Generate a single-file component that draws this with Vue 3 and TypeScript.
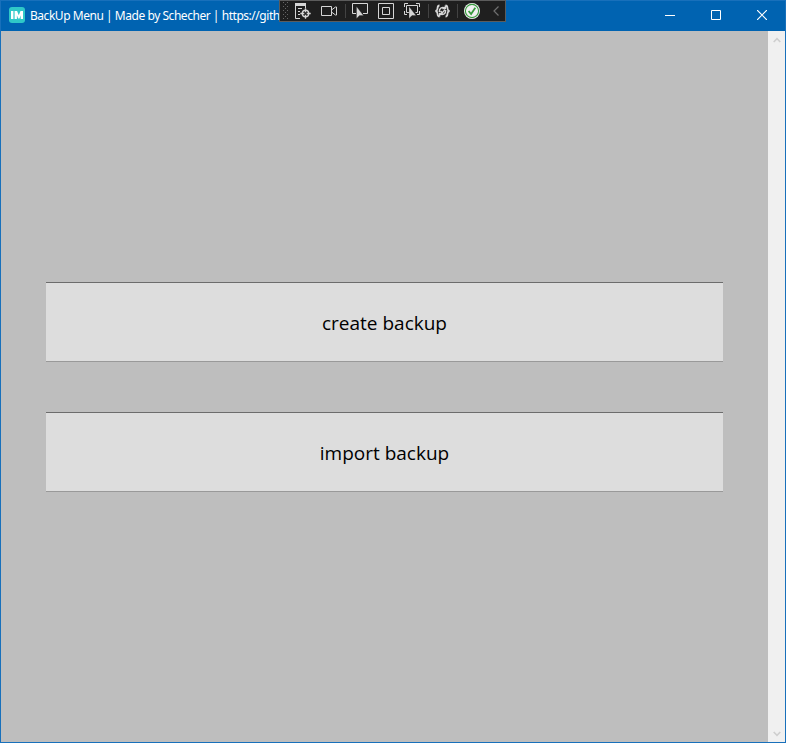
<script setup lang="ts">
import { ref } from 'vue'

interface MenuAction {
  id: string
  label: string
}

const title = ref('BackUp Menu | Made by Schecher | https://gith')
const actions: MenuAction[] = [
  { id: 'create', label: 'create backup' },
  { id: 'import', label: 'import backup' },
]
</script>

<template>
  <div class="window">
    <header class="titlebar">
      <svg class="logo" width="16" height="16" viewBox="0 0 16 16">
        <rect width="16" height="16" rx="3" fill="#2fc8c8" />
        <path d="M2 4h2.4v8H2zM5.6 4h2.5l1.7 4.2L11.5 4H14v8h-2.3V8.2L10.5 11.5H9.1L7.9 8.2V12H5.6z" fill="#fff" />
      </svg>
      <span class="title">{{ title }}</span>
      <div class="controls">
        <button class="control" aria-label="Minimize">
          <svg width="10" height="10" viewBox="0 0 10 10"><path d="M0 5.5h10" /></svg>
        </button>
        <button class="control" aria-label="Maximize">
          <svg width="10" height="10" viewBox="0 0 10 10"><path d="M.5.5h9v9h-9z" /></svg>
        </button>
        <button class="control" aria-label="Close">
          <svg width="10" height="10" viewBox="0 0 10 10"><path d="M0 0l10 10M10 0L0 10" stroke-width="1.2" /></svg>
        </button>
      </div>
    </header>

    <div class="debugbar">
      <svg class="grip" width="6" height="18" viewBox="0 0 6 18">
        <g fill="#666">
          <template v-for="n in 5" :key="n">
            <rect x="0" :y="(n - 1) * 4" width="1" height="1" />
            <rect x="4" :y="(n - 1) * 4" width="1" height="1" />
            <rect v-if="n < 5" x="2" :y="(n - 1) * 4 + 2" width="1" height="1" />
          </template>
        </g>
      </svg>
      <svg class="icon tree" viewBox="0 0 16 16">
        <path d="M0 0h11v3H0z" fill="#d6d6d6" stroke="none" />
        <path d="M.5 2v13.5H5M10.5 2v3M3 5.5h4M3 8.5h2M3 11.5h2" />
        <circle cx="10.5" cy="10.5" r="3.2" stroke-width="1.4" />
        <path d="M10.5 5.3v4M10.5 11.7v4M5.3 10.5h4M11.7 10.5h4" stroke-width="1.3" />
      </svg>
      <svg class="icon camera" viewBox="0 0 16 16">
        <path d="M.5 3.5h10v9H.5zM10.5 7l4-3h1v8h-1l-4-3" />
      </svg>
      <i class="divider first"></i>
      <svg class="icon select" viewBox="0 0 16 16">
        <path d="M4 10.5H.5V.5h15v10H11" />
        <path class="arrow" d="M4.5 3.5v12l3-3 4 .1z" />
      </svg>
      <svg class="icon adorners" viewBox="0 0 16 16">
        <path d="M.5.5h15v15H.5zM4.5 4.5h7v7h-7z" />
      </svg>
      <svg class="icon focus" viewBox="0 0 16 16">
        <path d="M.5 4V.5H4M12 .5h3.5V4M.5 8v3.5H3M15.5 8v3.5H13M5 9.5H2.5v-7h11v7h-2" />
        <path class="arrow" d="M5 3.500v12l3-3 4 .1z" />
      </svg>
      <i class="divider second"></i>
      <svg class="icon reload" viewBox="0 0 16 16">
        <path d="M4.500 2.500C2.500 2.500 2.700 4 2.500 5.500 2.400 7 1.900 7.700.5 8c1.400.3 1.900 1 2 2.500.2 1.500 0 3 2 3M10.500 2.500c2 0 1.800 1.500 2 3 .1 1.500.6 2.200 2 2.500-1.400.3-1.900 1-2 2.500-.2 1.500 0 3-2 3" stroke-width="1.800" />
        <path d="M4.300 9C4 5.300 6.800 3.600 10 4.800M10.700 7c.3 3.700-2.500 5.400-5.700 4.200M10.300 2.500v3H7.300M4.700 13.500v-3h3M5.500 8l1.800 1.800L10 6.700" stroke-width="1.400" />
      </svg>
      <i class="divider third"></i>
      <svg class="icon status" viewBox="0 0 16 16">
        <circle cx="8" cy="8" r="8" fill="#f1f1f1" stroke="none" />
        <circle cx="8" cy="8" r="6.6" stroke="#379b3d" stroke-width="1.1" />
        <path d="M4.6 8l2.5 3 4.2-6.2" stroke="#379b3d" stroke-width="1.8" />
      </svg>
      <svg class="collapse" width="6" height="10" viewBox="0 0 6 10">
        <path d="M5.5 .5L1 5l4.5 4.5" fill="none" stroke="#707070" stroke-width="1.2" />
      </svg>
    </div>

    <div class="body">
      <main class="content">
        <button v-for="action in actions" :key="action.id" class="action" :class="action.id">
          <span>{{ action.label }}</span>
        </button>
      </main>
      <aside class="scrollbar">
        <svg width="8" height="6" viewBox="0 0 8 6"><path d="M.7 5L4 1.6 7.3 5" /></svg>
        <svg width="8" height="6" viewBox="0 0 8 6"><path d="M.7 1L4 4.4 7.3 1" /></svg>
      </aside>
    </div>
  </div>
</template>

<style>
body {
  overflow: hidden;
}
</style>

<style scoped>
.window {
  position: relative;
  display: flex;
  flex-direction: column;
  box-sizing: border-box;
  width: 786px;
  height: 743px;
  border: 1px solid #1870bb;
  font-family: "Open Sans", "Noto Sans", sans-serif;
}
button {
  padding: 0;
  border: 0;
  font-family: inherit;
}
.titlebar {
  display: flex;
  align-items: center;
  flex: none;
  height: 30px;
  padding-left: 8px;
  background: #0063b1;
}
.logo {
  flex: none;
  margin-top: -2px;
}
.title {
  margin-left: 5px;
  color: #fff;
  font-family: "Noto Sans", sans-serif;
  font-size: 12px;
  line-height: 20px;
  letter-spacing: -0.46px;
  white-space: nowrap;
}
.controls {
  display: flex;
  height: 100%;
  margin-left: auto;
}
.control {
  display: flex;
  align-items: center;
  justify-content: center;
  width: 46px;
  padding-bottom: 2px;
  background: transparent;
}
.control path {
  fill: none;
  stroke: #fff;
}
.debugbar {
  position: absolute;
  top: -1px;
  left: 278px;
  display: flex;
  align-items: center;
  box-sizing: border-box;
  width: 227px;
  height: 22px;
  padding-left: 3px;
  border: 1px solid #5c5c5c;
  background: #1f1f1f;
}
.grip {
  flex: none;
  margin-right: 6px;
}
.icon {
  flex: none;
  width: 16px;
  height: 16px;
  fill: none;
  stroke: #d6d6d6;
}
.arrow {
  fill: #d6d6d6;
  stroke: #1f1f1f;
  stroke-width: 0.3;
}
.camera,
.adorners,
.focus {
  margin-left: 10px;
}
.divider {
  flex: none;
  width: 1px;
  height: 14px;
  background: #434343;
}
.first {
  margin: 0 6px 0 8px;
}
.second {
  margin: 0 6px 0 8px;
}
.third {
  margin: 0 6px;
}
.collapse {
  margin-left: 13px;
}
.body {
  display: flex;
  flex: 1;
}
.content {
  display: flex;
  flex: 1;
  flex-direction: column;
  justify-content: center;
  gap: 50px;
  padding: 1px 45px 0;
  background: #bebebe;
}
.action {
  box-sizing: border-box;
  height: 80px;
  padding-top: 2px;
  border-top: 1px solid #6c6c6c;
  border-bottom: 1px solid #999;
  background: #ddd;
  color: #000;
  font-size: 19px;
  line-height: 28px;
}
.scrollbar {
  display: flex;
  flex-direction: column;
  align-items: center;
  justify-content: space-between;
  box-sizing: border-box;
  width: 17px;
  padding: 6px 0 5px;
  background: #f0f0f0;
}
.scrollbar path {
  fill: none;
  stroke: #cfcfcf;
  stroke-width: 1.6;
}
</style>
